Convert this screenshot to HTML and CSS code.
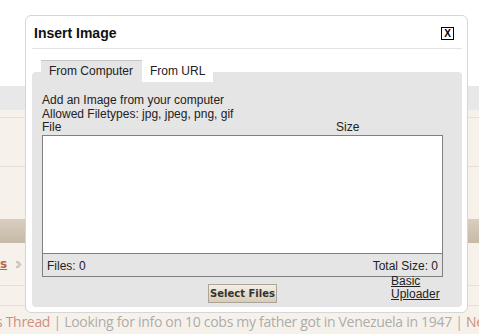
FILE: index.html
```html
<!DOCTYPE html>
<html lang="en">

<head>
    <meta charset="UTF-8">
    <meta name="viewport" content="width=device-width, initial-scale=1.0">
    <title>Insert Image</title>
    <link rel="stylesheet" href="styles.css">
</head>

<body>
    <div class="page">
        <div class="page-top"></div>
        <div class="page-nav"></div>
        <div class="page-row row-a"></div>
        <div class="page-row row-b"></div>
        <div class="page-row row-c"></div>
        <div class="page-bar"></div>
        <div class="page-row row-d">
            <a class="crumb" href="#">s</a>
            <svg class="crumb-icon" width="7" height="9" viewBox="0 0 7 9">
                <path d="M1 1.5h2.5L6 4.5 3.5 7.5H1L3.5 4.5z" fill="#d9d2c8" stroke="#bdb5aa" stroke-width="0.8"/>
            </svg>
        </div>
        <div class="page-row row-e"></div>
        <div class="thread-nav">
            <span class="thread-link">s Thread</span> | Looking for info on 10 cobs my father got in Venezuela in 1947 | <span class="thread-link">Next Thread</span>
        </div>
    </div>

    <div class="dialog">
        <div class="dialog-header">
            <h1>Insert Image</h1>
            <button class="close">X</button>
        </div>

        <div class="tabs">
            <div class="tab active">From Computer</div>
            <div class="tab">From URL</div>
        </div>

        <div class="panel">
            <p class="intro">Add an Image from your computer</p>
            <p class="intro">Allowed Filetypes: jpg, jpeg, png, gif</p>
            <div class="cols">
                <span>File</span>
                <span class="col-size">Size</span>
            </div>
            <div class="file-box">
                <div class="file-list"></div>
                <div class="file-footer">
                    <span>Files: 0</span>
                    <span>Total Size: 0</span>
                </div>
            </div>
            <div class="actions">
                <button class="select-btn">Select Files</button>
                <a class="basic-link" href="#">Basic Uploader</a>
            </div>
        </div>
    </div>
</body>

</html>
```

FILE: styles.css
```css
* {
    box-sizing: border-box;
}

body {
    margin: 0;
    width: 479px;
    height: 334px;
    overflow: hidden;
    font-family: 'Liberation Sans', Arial, sans-serif;
    font-size: 12px;
    color: #222;
    background: #fff;
}

/* page behind the dialog */
.page {
    width: 479px;
    overflow: hidden;
}

.page-top {
    height: 86px;
    background: #fff;
}

.page-nav {
    height: 24px;
    background: #e8e8e8;
}

.page-row {
    background: #f6f2eb;
    border-bottom: 1px solid #e7dfd3;
}

.row-a {
    height: 8px;
}

.row-b {
    height: 49px;
}

.row-c {
    height: 52px;
    border-bottom: none;
}

.page-bar {
    height: 24px;
    background: linear-gradient(#d9cfc0, #c6b9a6);
}

.row-d {
    height: 43px;
    display: flex;
    align-items: center;
    gap: 8px;
}

.crumb {
    font-family: 'DejaVu Sans', Verdana, sans-serif;
    font-size: 12px;
    font-weight: bold;
    color: #b8654f;
}

.row-e {
    height: 20px;
}

.thread-nav {
    height: 29px;
    background: #f6f2eb;
    padding-top: 6px;
    margin-left: -4px;
    white-space: nowrap;
    font-family: 'Open Sans', sans-serif;
    font-size: 14px;
    letter-spacing: -0.3px;
    color: #acacac;
}

.thread-link {
    color: #cf8f80;
}

/* dialog */
.dialog {
    position: absolute;
    left: 25px;
    top: 15px;
    width: 443px;
    height: 298px;
    background: #fff;
    border: 1px solid #d6d6d6;
    border-radius: 6px;
    padding: 0 5px 5px 6px;
    display: flex;
    flex-direction: column;
}

.dialog-header {
    display: flex;
    justify-content: space-between;
    align-items: center;
    padding: 9px 8px 7px 2px;
    border-bottom: 1px solid #e3e3e3;
}

.dialog-header h1 {
    margin: 0;
    font-size: 14px;
    line-height: 16px;
    font-weight: bold;
    color: #111;
}

.close {
    width: 13px;
    height: 13px;
    padding: 0;
    border: 1px solid #000;
    background: #fff;
    font-family: 'Liberation Sans', Arial, sans-serif;
    font-size: 10px;
    line-height: 11px;
    font-weight: bold;
    color: #000;
}

.tabs {
    display: flex;
    margin: 11px 0 -10px 9px;
    height: 22px;
    position: relative;
    z-index: 1;
}

.tab {
    padding: 4px 8px 0 8px;
    line-height: 14px;
    background: #fff;
    color: #222;
}

.tab.active {
    background: #e5e5e5;
    border-top: 1px solid #c6c6c6;
    padding: 3px 9px 0 8px;
}

.panel {
    flex: 1;
    background: #e5e5e5;
    border-radius: 4px;
    padding: 21px 19px 0 10px;
}

.intro {
    margin: 0;
    line-height: 14px;
}

.cols {
    display: flex;
    line-height: 13px;
    margin-bottom: 1px;
}

.col-size {
    margin-left: auto;
    width: 107px;
}

.file-box {
    border: 1px solid #808080;
}

.file-list {
    height: 117px;
    background: #fff;
}

.file-footer {
    display: flex;
    justify-content: space-between;
    height: 23px;
    border-top: 1px solid #808080;
    padding: 4px 4px 0 4px;
    line-height: 16px;
    background: #e5e5e5;
}

.actions {
    display: grid;
    grid-template-columns: 1fr auto 1fr;
    align-items: start;
}

.select-btn {
    grid-column: 2;
    margin-top: 7px;
    height: 19px;
    padding: 0 1px;
    border: 1px solid #aaa49a;
    background: linear-gradient(#f5efe5, #d8cbb7);
    font-family: 'DejaVu Sans', Tahoma, sans-serif;
    font-size: 10px;
    font-weight: bold;
    color: #333;
}

.basic-link {
    grid-column: 3;
    justify-self: end;
    width: 52px;
    margin-top: -2px;
    line-height: 13px;
    color: #222;
}
```
